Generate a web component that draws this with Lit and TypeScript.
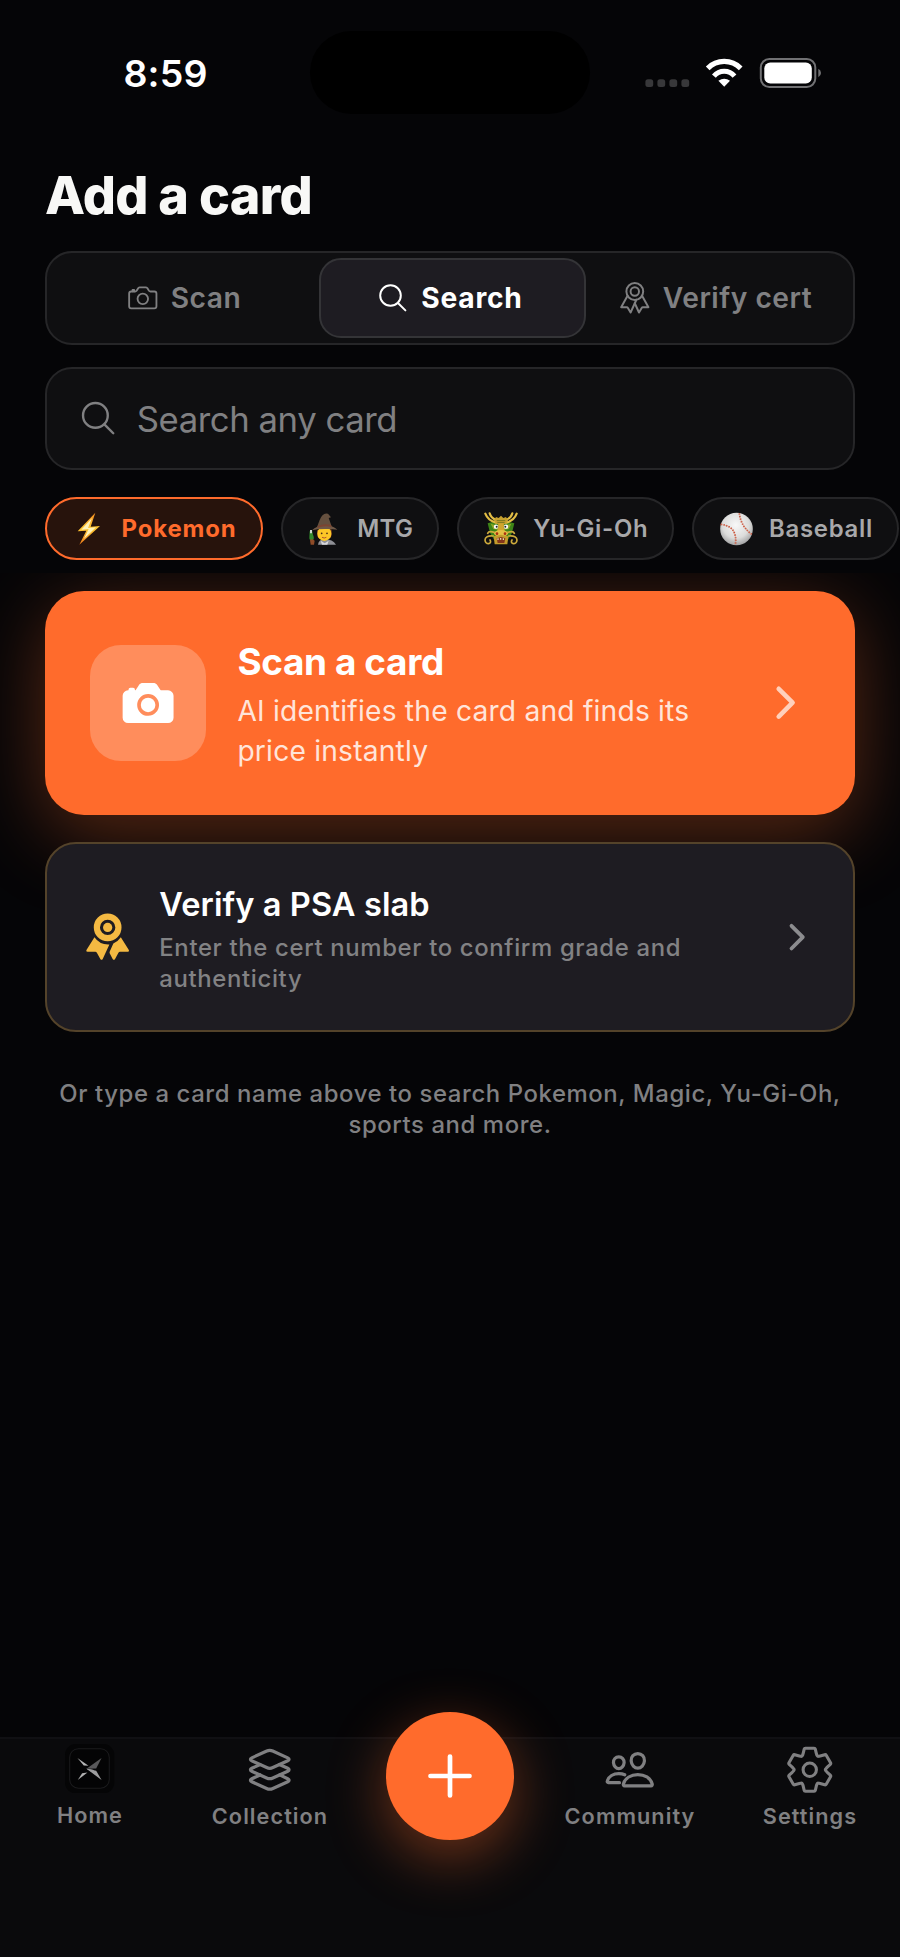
import { LitElement, html, css, svg } from "lit";
import { customElement } from "lit/decorators.js";

const cameraOutline = html`<svg class="ic15" viewBox="0 0 512 512" fill="none" stroke="currentColor" stroke-width="28" stroke-linecap="round" stroke-linejoin="round">
  <path d="M350.54 148.68l-26.62-42.06C318.31 100.08 310.62 96 302 96h-92c-8.62 0-16.31 4.08-21.92 10.62l-26.62 42.06C155.85 155.23 148.62 160 140 160H80a32 32 0 00-32 32v192a32 32 0 0032 32h352a32 32 0 0032-32V192a32 32 0 00-32-32h-59c-8.65 0-16.85-4.77-22.46-11.32z"/>
  <circle cx="256" cy="272" r="80"/><path d="M124 158v-22h-24v22"/></svg>`;

const cameraFill = html`<svg class="ic26" viewBox="0 0 512 512" fill="currentColor">
  <circle cx="256" cy="272" r="64"/>
  <path d="M432 144h-59c-3 0-6.72-1.94-9.62-5l-25.94-40.94a15.52 15.52 0 00-1.37-1.85C327.11 85.76 315 80 302 80h-92c-13 0-25.11 5.76-34.07 16.21a15.52 15.52 0 00-1.37 1.85l-25.94 41c-2.22 2.42-5.34 5-8.62 5v-8a16 16 0 00-16-16h-24a16 16 0 00-16 16v8h-4a48.05 48.05 0 00-48 48V384a48.05 48.05 0 0048 48h352a48.05 48.05 0 0048-48V192a48.05 48.05 0 00-48-48zM256 368a96 96 0 1196-96 96.11 96.11 0 01-96 96z"/></svg>`;

const search = (cls: string) => html`<svg class=${cls} viewBox="0 0 512 512" fill="none" stroke="currentColor" stroke-width="30" stroke-linecap="round">
  <path d="M221.09 64a157.09 157.09 0 10157.09 157.09A157.1 157.1 0 00221.09 64z"/><path d="M338.29 338.29L448 448"/></svg>`;

const ribbonOutline = html`<svg class="ic15" viewBox="0 0 512 512" fill="none" stroke="currentColor" stroke-width="30" stroke-linecap="round" stroke-linejoin="round">
  <circle cx="256" cy="160" r="128"/><circle cx="256" cy="160" r="64"/>
  <path d="M143.65 227.82L48 400l86.86-.42a16 16 0 0113.82 7.8L192 480l88.33-194.32"/>
  <path d="M366.54 224L464 400l-86.86-.42a16 16 0 00-13.82 7.8L320 480l-64-140.8"/></svg>`;

const ribbonFill = html`<svg class="ic22 gold" viewBox="0 0 512 512" fill="currentColor">
  <circle cx="256" cy="160" r="48"/>
  <circle cx="256" cy="160" r="112" fill="none" stroke="currentColor" stroke-width="64"/>
  <path d="M119 262A176 176 0 00274 337L205 488Q192 506 180 488L144 424Q138 414 128 414L46 414Q27 410 36 394Z"/>
  <path d="M393 262L476 394Q485 410 466 414L384 414Q374 414 368 424L333 488Q320 506 308 488L277 428Q274 420 278 411L315 326A176 176 0 00393 262Z"/></svg>`;

const chevron = (cls: string) => html`<svg class=${cls} viewBox="0 0 512 512" fill="none" stroke="currentColor" stroke-width="48" stroke-linecap="round" stroke-linejoin="round"><path d="M184 112l144 144-144 144"/></svg>`;

const layers = html`<svg class="ic23" viewBox="0 0 512 512" fill="none" stroke="currentColor" stroke-width="32" stroke-linecap="round" stroke-linejoin="round">
  <path d="M434.8 137.65l-149.36-68.1c-16.19-7.4-42.69-7.4-58.88 0L77.3 137.65c-17.6 8-17.6 21.09 0 29.09l148 67.5c16.89 7.7 44.69 7.7 61.58 0l148-67.5c17.52-8 17.52-21.1-.08-29.09z"/>
  <path d="M160 308.52l-82.7 37.11c-17.6 8-17.6 21.1 0 29.1l148 67.5c16.89 7.69 44.69 7.69 61.58 0l148-67.5c17.6-8 17.6-21.1 0-29.1l-79.94-38.47"/>
  <path d="M160 204.48l-82.8 37.16c-17.6 8-17.6 21.1 0 29.1l148 67.49c16.89 7.7 44.69 7.7 61.58 0l148-67.49c17.7-8 17.7-21.1.1-29.1L352 204.48"/></svg>`;

const people = html`<svg class="ic23" viewBox="0 0 512 512" fill="none" stroke="currentColor" stroke-width="32" stroke-linecap="round" stroke-linejoin="round">
  <path d="M402 168c-2.93 40.67-33.1 72-66 72s-63.12-31.32-66-72c-3-42.31 26.37-72 66-72s69 30.46 66 72z"/>
  <path d="M336 304c-65.17 0-127.84 32.37-143.54 95.41-2.08 8.34 3.15 16.59 11.72 16.59h263.65c8.57 0 13.77-8.25 11.72-16.59C463.85 335.36 401.18 304 336 304z"/>
  <path d="M200 185.94c-2.34 32.48-26.72 58.06-53 58.06s-50.7-25.57-53-58.06C91.61 152.15 115.34 128 147 128s55.39 24.77 53 57.94z"/>
  <path d="M206 306c-18.05-8.27-37.93-11.45-59-11.45-52 0-102.1 25.85-114.65 76.2-1.65 6.66 2.53 13.25 9.37 13.25H154"/></svg>`;

/* Six-toothed gear outline: one tooth rotated around the centre, corners softened. */
function gearPath(): string {
  const tooth: [number, number][] = [[-20, -47.5], [-16, -64.5], [16, -64.5], [20, -47.5], [23, -39.8]];
  const pts: [number, number][] = [];
  for (let k = 0; k < 6; k++) {
    const a = (k * Math.PI) / 3;
    for (const [x, y] of tooth) pts.push([x * Math.cos(a) - y * Math.sin(a), x * Math.sin(a) + y * Math.cos(a)]);
  }
  const n = pts.length;
  let d = "";
  for (let i = 0; i < n; i++) {
    const p = pts[(i + n - 1) % n], c = pts[i], q = pts[(i + 1) % n];
    const toward = (t: [number, number]) => {
      const len = Math.hypot(t[0] - c[0], t[1] - c[1]);
      const f = Math.min(3, len / 2) / len;
      return `${(c[0] + (t[0] - c[0]) * f).toFixed(2)} ${(c[1] + (t[1] - c[1]) * f).toFixed(2)}`;
    };
    d += `${i ? "L" : "M"}${toward(p)}Q${c[0].toFixed(2)} ${c[1].toFixed(2)} ${toward(q)}`;
  }
  return d + "Z";
}
const gear = html`<svg class="ic23" viewBox="-77.25 -77.25 154.5 154.5" fill="none" stroke="currentColor" stroke-width="9.2" stroke-linejoin="round"><path d=${gearPath()}/><circle r="20"/></svg>`;

const homeMark = html`<svg class="ic22" viewBox="0 0 147 147">
  <rect width="147" height="147" rx="32" fill="#050506"/>
  <rect x="14" y="14" width="118" height="118" rx="26" fill="#040405" stroke="#1b1b1d" stroke-width="3"/>
  <path d="M37 42L70 65L56 64Z" fill="#b5b5b6"/>
  <path d="M109 42L64 74L93 73Z" fill="#58585a"/>
  <path d="M64 74L84 77L109 107Q96 92 64 74Z" fill="#a5a5a7"/>
  <path d="M64 74L93 80L109 107Z" fill="#9d9d9f"/>
  <path d="M38 107L51 87L67 85Z" fill="#b0b0b1"/></svg>`;

const bolt = html`<svg class="emoji" viewBox="0 0 102 102"><defs><linearGradient id="b" x1="0" y1="0" x2="0" y2="1"><stop offset="0" stop-color="#f58a1e"/><stop offset=".5" stop-color="#ffc933"/><stop offset="1" stop-color="#f07a18"/></linearGradient></defs>
  <path d="M70 2L17 58L43 56L22 98L84 42L56 44Z" fill="url(#b)"/><path d="M60 18L28 53L50 51L36 80L72 46L48 48Z" fill="#fff3b8"/></svg>`;

const mage = html`<svg class="emoji" viewBox="0 0 102 102">
  <path d="M30 98Q32 82 50 82Q74 82 84 98Z" fill="#8f9096"/><path d="M38 86L50 94L62 86L58 98H42Z" fill="#d8d8dc"/>
  <path d="M28 54Q26 76 34 79L66 79Q74 72 70 52Z" fill="#8c4a21"/>
  <ellipse cx="49" cy="65" rx="21" ry="22" fill="#fcc727"/>
  <circle cx="41" cy="64" r="2.6" fill="#4a2c16"/><circle cx="57" cy="64" r="2.6" fill="#4a2c16"/>
  <path d="M42 76Q49 80 55 76" stroke="#b4552a" stroke-width="3" fill="none"/>
  <path d="M35 24Q44 0 60 5L69 16L62 18L72 46L26 48Z" fill="#65503f"/>
  <path d="M12 55Q30 38 50 42Q72 38 88 53Q70 50 50 51Q28 51 12 55Z" fill="#705846"/>
  <path d="M30 41Q50 33 69 39L71 45Q50 39 28 47Z" fill="#7b4431"/>
  <path d="M5 58L12 55L15 68Q21 80 13 86Q3 86 4 76Z" fill="#32882b"/><path d="M6 54h6v10H6z" fill="#ccd6cd"/>
  <path d="M6 84Q12 79 20 86L18 98H8Z" fill="#8e4b27"/></svg>`;

const dragon = html`<svg class="emoji" viewBox="0 0 102 102">
  <path d="M11 34L33 28L50 36L68 28L91 34L84 62L68 90H34L18 62Z" fill="#3d8417"/>
  <g fill="none" stroke="#e2bd45" stroke-width="6.500" stroke-linecap="round"><path d="M4 5Q12 26 36 32M17 4Q21 18 38 25"/><path d="M98 5Q90 26 66 32M85 4Q81 18 64 25"/></g>
  <path d="M30 25L36 15L44 18L51 11L58 18L66 15L72 25L66 36H36Z" fill="#c7a12f"/>
  <path d="M38 26H64M40 32H62" stroke="#77781f" stroke-width="3"/>
  <path d="M43 34H59L64 68H38Z" fill="#d0a52d"/>
  <path d="M20 35L43 42L42 53L28 51Z" fill="#8fa828"/><path d="M82 35L59 42L60 53L74 51Z" fill="#8fa828"/>
  <circle cx="36" cy="44" r="6.500" fill="#fff"/><circle cx="66" cy="44" r="6.500" fill="#fff"/><circle cx="38" cy="44" r="3" fill="#222"/><circle cx="64" cy="44" r="3" fill="#222"/>
  <ellipse cx="51" cy="64" rx="21" ry="10" fill="#e4c044"/><circle cx="39" cy="65" r="4" fill="#a92f12"/><circle cx="63" cy="65" r="4" fill="#a92f12"/>
  <path d="M29 73L51 68L73 73L70 97H32Z" fill="#c39b2b"/><path d="M38 79L51 75L64 79L61 93H41Z" fill="#85361b"/><path d="M42 79v5M50 78v5M58 79v5" stroke="#f3e7b5" stroke-width="3.500"/>
  <g fill="none" stroke="#cdaa3c" stroke-width="5" stroke-linecap="round"><path d="M31 61Q14 56 11 64M28 72Q3 70 3 84Q4 95 14 95Q23 92 18 84"/><path d="M71 61Q88 56 91 64M74 72Q99 70 99 84Q98 95 88 95Q79 92 84 84"/></g></svg>`;

const baseball = html`<svg class="emoji" viewBox="0 0 102 102"><defs><radialGradient id="g" cx=".48" cy=".38" r=".62"><stop offset="0" stop-color="#f8f8f8"/><stop offset=".65" stop-color="#dcdcdb"/><stop offset="1" stop-color="#a1a1a2"/></radialGradient></defs>
  <circle cx="52.500" cy="51" r="49" fill="url(#g)"/>
  <g fill="none" stroke="#c9452a" stroke-width="5" stroke-dasharray="4 4"><path d="M5 37Q57 42 49 98"/><path d="M61 4Q65 42 98 67"/></g>
  <g fill="none" stroke="#d38b76" stroke-width="1.500"><path d="M5 37Q57 42 49 98"/><path d="M61 4Q65 42 98 67"/></g></svg>`;

const statusIcons = html`<svg class="sysicons" viewBox="0 0 178 32" fill="none">
  ${[0, 12, 24, 36].map((x) => svg`<rect x=${x + 0.4} y="22.200" width="7.800" height="7.800" rx="2.500" fill="#38383a"/>`)}
  <g transform="translate(60.500 2)"><path d="M2.200 9.300A23.300 23.300 0 0135.200 9.300" stroke="#fff" stroke-width="5.200"/><path d="M8.400 17.100A13.500 13.500 0 0129 17.100" stroke="#fff" stroke-width="5"/><path d="M12.900 21.800Q18.700 17.600 24.500 21.800L18.700 27.700Z" fill="#fff"/></g>
  <rect x="115.800" y="2" width="54.500" height="28" rx="8.500" stroke="#717173" stroke-width="2"/>
  <rect x="119.300" y="5.600" width="47.500" height="20.800" rx="6" fill="#fff"/>
  <path d="M173.300 11.800Q176 13.300 176 16Q176 18.800 173.300 20.300Z" fill="#717173"/></svg>`;

@customElement("app-root")
export class AppRoot extends LitElement {
  static styles = css`
    :host { display: block; }
    * { box-sizing: border-box; }
    svg { display: block; flex: none; }
    .screen { width: 900px; height: 1957px; background: #050507; color: #fff; font-family: Inter, "Liberation Sans", sans-serif; display: flex; flex-direction: column; overflow: hidden; white-space: nowrap; }
    .ic15 { width: 33.600px; height: 33.600px; } .ic18 { width: 40.300px; height: 40.300px; }
    .ic22 { width: 49.300px; height: 49.300px; } .ic23 { width: 51.500px; height: 51.500px; } .ic26 { width: 58.200px; height: 58.200px; }
    .gold { color: #f4b942; }
    .status { height: 145px; display: grid; grid-template-columns: 310px 280px 310px; align-items: center; }
    .time { padding: 2px 0 0 21px; text-align: center; font-size: 37.500px; font-weight: 600; line-height: 44px; letter-spacing: 0.150px; }
    .island { height: 83px; border-radius: 42px; background: #000; }
    .sysicons { width: 178px; height: 32px; margin-left: 55px; }
    .title { margin: 21px 45px 25px; font-size: 52.100px; line-height: 60px; font-weight: 800; letter-spacing: -0.720px; color: #f8f8f6; }
    .segments { margin: 0 45px; height: 94px; border: 2px solid #262628; border-radius: 27px; background: #0f0f11; padding: 5px; display: grid; grid-template-columns: 267fr 267fr 262fr; }
    .segment { display: flex; align-items: center; justify-content: center; gap: 11.400px; padding-right: 4px; border: 2px solid transparent; border-radius: 22px; font-size: 28.200px; font-weight: 600; letter-spacing: 0.500px; color: #808082; }
    .segment.on { background: #1e1c22; border-color: #343437; color: #fff; font-weight: 700; letter-spacing: 0.750px; padding-right: 6px; }
    .field { margin: 22px 45px 0; height: 103px; border: 2px solid #262628; border-radius: 27px; background: #0f0f11; padding-left: 31px; display: flex; align-items: center; gap: 18.500px; font-size: 34.700px; letter-spacing: -0.440px; color: #808082; }
    .chips { margin: 27px 0 13px 45px; display: flex; gap: 18px; }
    .chip { flex: none; height: 63px; border: 2px solid #262628; border-radius: 32px; background: #0f0f11; padding: 0 24px 0 25px; display: flex; align-items: center; gap: 15.500px; font-size: 23.900px; font-weight: 600; letter-spacing: 0.750px; color: #a8a8aa; }
    .chip.on { border-color: #ff6b2c; background: #27130c; color: #ff6b2c; font-weight: 700; letter-spacing: 0.900px; }
    .chip.tight { letter-spacing: 0.400px; padding-right: 23.500px; }
    .emoji { width: 34px; height: 34px; }
    .scroll { flex: 1; min-height: 0; overflow: hidden; padding: 18px 45px 0; }
    .scan { height: 224px; border-radius: 39px; background: #ff6b2c; box-shadow: 0 18px 80px rgba(255, 107, 44, 0.34); display: flex; align-items: center; padding: 0 45px; gap: 31px; }
    .tile { flex: none; width: 116.400px; height: 116.400px; border-radius: 31px; background: #ff8d5c; display: grid; place-items: center; }
    .scan .copy { flex: 1; padding-top: 5px; }
    .scan h2 { margin: 0 0 7px; font-size: 36.900px; line-height: 44px; font-weight: 700; letter-spacing: -0.360px; }
    .scan p { margin: 0; font-size: 28.200px; line-height: 40.300px; letter-spacing: 0.200px; color: #ffe5da; }
    .scan .chev { width: 49.300px; height: 49.300px; color: #ffd0bb; }
    .verify { position: relative; margin-top: 27px; height: 190px; border: 2px solid #54432a; border-radius: 31px; background: #1e1c22; display: flex; align-items: center; padding: 0 36px; gap: 27px; }
    .verify .copy { flex: 1; padding-top: 4.300px; }
    .verify h2 { margin: 0 0 7.500px; font-size: 32.600px; line-height: 40px; font-weight: 600; letter-spacing: 0.080px; }
    .verify p { margin: 0; font-size: 23.900px; line-height: 31.300px; font-weight: 500; letter-spacing: 0.650px; color: #828284; }
    .verify .chev { width: 40.300px; height: 40.300px; color: #8c8c8f; }
    .hint { margin: 45.700px 0 0; text-align: center; font-size: 23.900px; line-height: 31.300px; font-weight: 500; letter-spacing: 0.590px; color: #808082; }
    .nav { flex: none; height: 220px; border-top: 2px solid #101013; background: #0a0a0c; display: grid; grid-template-columns: repeat(5, 180px); align-items: start; color: #808082; }
    .tab { display: flex; flex-direction: column; align-items: center; gap: 5.600px; padding-top: 5.200px; font-size: 21.700px; line-height: 30px; font-weight: 600; letter-spacing: 1.050px; }
    .tab.first { gap: 6.600px; }
    .fab { justify-self: center; margin-top: -27px; width: 128px; height: 128px; border-radius: 50%; background: #ff6b2c; box-shadow: 0 17px 58px rgba(255, 107, 44, 0.42); display: grid; place-items: center; }
    .plus { width: 46px; height: 46px; }
  `;

  render() {
    return html`<div class="screen">
      <header class="status"><div class="time">8:59</div><div class="island"></div>${statusIcons}</header>
      <div class="title">Add a card</div>
      <div class="segments">
        <div class="segment">${cameraOutline}<span>Scan</span></div>
        <div class="segment on">${search("ic15")}<span>Search</span></div>
        <div class="segment">${ribbonOutline}<span>Verify cert</span></div>
      </div>
      <div class="field">${search("ic18")}<span>Search any card</span></div>
      <div class="chips">
        <div class="chip on">${bolt}<span>Pokemon</span></div>
        <div class="chip tight">${mage}<span>MTG</span></div>
        <div class="chip">${dragon}<span>Yu-Gi-Oh</span></div>
        <div class="chip">${baseball}<span>Baseball</span></div>
      </div>
      <main class="scroll">
        <section class="scan"><div class="tile">${cameraFill}</div>
          <div class="copy"><h2>Scan a card</h2><p>AI identifies the card and finds its<br />price instantly</p></div>${chevron("chev")}</section>
        <section class="verify">${ribbonFill}
          <div class="copy"><h2>Verify a PSA slab</h2><p>Enter the cert number to confirm grade and<br />authenticity</p></div>${chevron("chev")}</section>
        <p class="hint">Or type a card name above to search Pokemon, Magic, Yu-Gi-Oh,<br />sports and more.</p>
      </main>
      <nav class="nav">
        <div class="tab first">${homeMark}<span>Home</span></div>
        <div class="tab">${layers}<span>Collection</span></div>
        <div class="fab"><svg class="plus" viewBox="0 0 46 46" stroke="#fff" stroke-width="4.700" stroke-linecap="round"><path d="M23 3.500V42.500M3.500 23H42.500"/></svg></div>
        <div class="tab">${people}<span>Community</span></div>
        <div class="tab">${gear}<span>Settings</span></div>
      </nav>
    </div>`;
  }
}
